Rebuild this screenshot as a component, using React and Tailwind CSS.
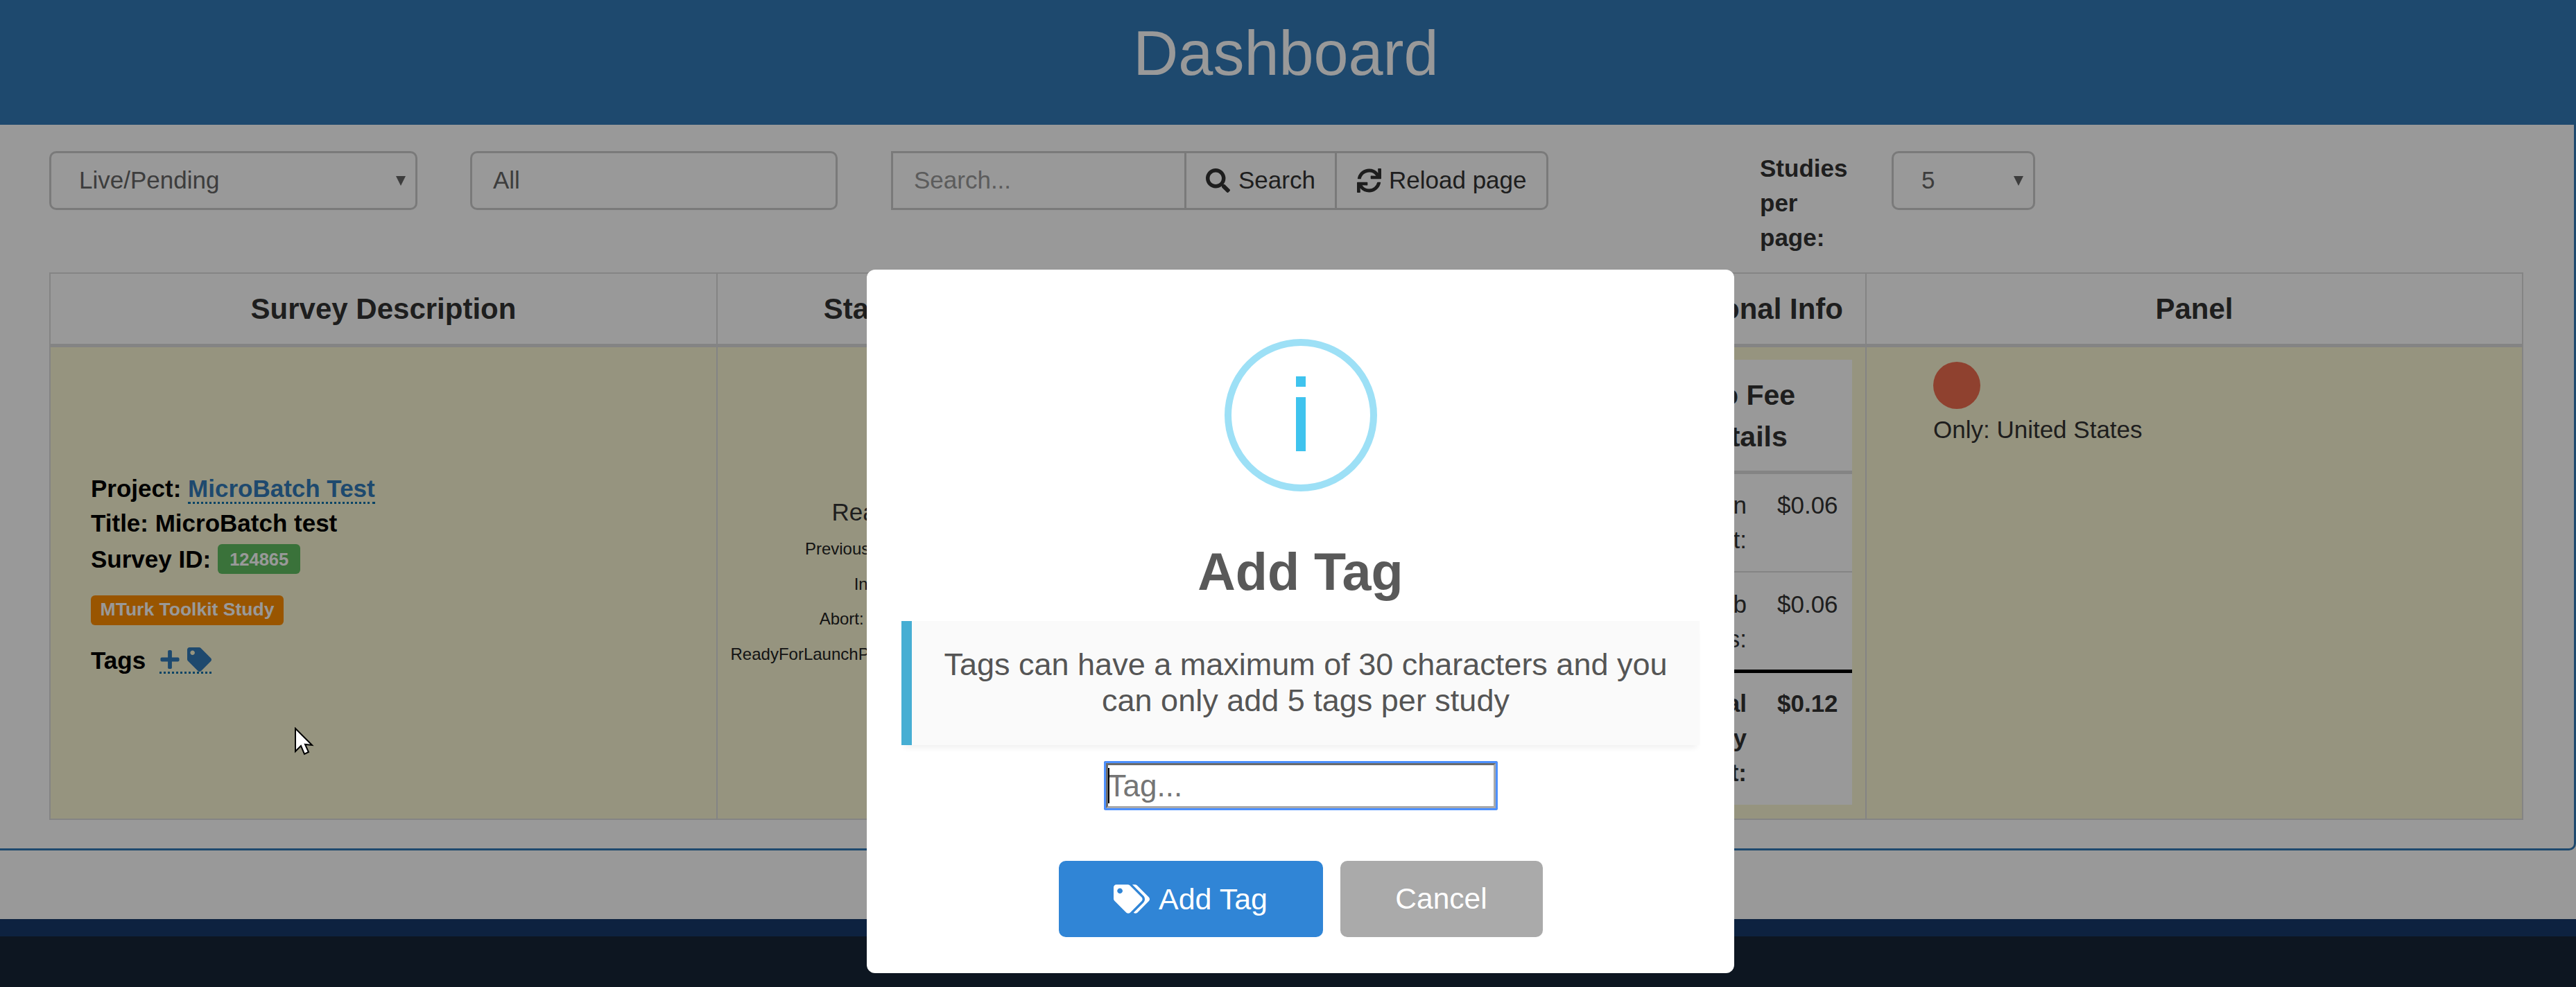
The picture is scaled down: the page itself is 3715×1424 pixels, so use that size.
import React from "react";
import { FaSearch, FaSync, FaTag, FaTags, FaPlus } from "react-icons/fa";

function Caret() {
  return (
    <svg width="14" height="14" viewBox="0 0 14 14" className="shrink-0">
      <polygon points="0,0 14,0 7,14" fill="#666" />
    </svg>
  );
}

function FeeRow({ label, value, bold, border }) {
  return (
    <div className={`${border} flex ${bold ? "font-bold" : ""} text-[35px] leading-[50px] text-[#333]`}>
      <div className="w-[169px] text-right">{label}</div>
      <div className="ml-[44px]">{value}</div>
    </div>
  );
}

function Cursor() {
  return (
    <svg className="absolute left-[424px] top-[1049px]" width="30" height="42" viewBox="0 0 30 42">
      <path d="M2 2 L2 35 L10 27 L15 39 L21 36 L16 25 L26 26 Z" fill="#fff" stroke="#000" strokeWidth="2" strokeLinejoin="miter" />
    </svg>
  );
}

export default function App() {
  return (
    <div className="relative w-[3715px] h-[1424px] overflow-hidden bg-white text-[#333] text-[35px] font-['Liberation_Sans',Arial,sans-serif]">
      <header className="h-[180px] bg-[#337ab7] flex items-center justify-center">
        <h1 className="text-[90px] leading-none text-white pb-[26px] pr-[6px]">Dashboard</h1>
      </header>

      <main className="h-[1047px] border-r-[3px] border-b-[3px] border-[#337ab7] rounded-br-[10px] pl-[71px] pr-[75px] pt-[38px]">
        <div className="h-[175px] flex items-start">
          <div className="w-[531px] h-[85px] shrink-0 border-[3px] border-[#ccc] rounded-[10px] flex items-center justify-between pl-[40px] pr-[14px] text-[#666]">
            <span>Live/Pending</span>
            <Caret />
          </div>
          <div className="ml-[76px] w-[530px] h-[85px] border-[3px] border-[#ccc] rounded-[10px] flex items-center pl-[30px] text-[#666]">All</div>

          <div className="ml-[77px] h-[85px] w-[948px] flex border-[3px] border-[#ccc] rounded-r-[10px]">
            <div className="w-[423px] flex items-center pl-[30px] text-[#999] border-r-[3px] border-[#ccc]">Search...</div>
            <div className="w-[217px] flex items-center pl-[28px] gap-[12px] border-r-[3px] border-[#ccc]">
              <FaSearch className="w-[35px] h-[35px]" />
              <span>Search</span>
            </div>
            <div className="flex-1 flex items-center pl-[29px] gap-[11px]">
              <FaSync className="w-[35px] h-[35px]" />
              <span>Reload page</span>
            </div>
          </div>

          <div className="ml-[305px] w-[130px] font-bold leading-[50px]">Studies per page:</div>
          <div className="ml-[60px] w-[207px] h-[85px] border-[3px] border-[#ccc] rounded-[10px] flex items-center justify-between pl-[40px] pr-[14px] text-[#666]">
            <span>5</span>
            <Caret />
          </div>
        </div>

        <table className="table-fixed border-collapse w-[3566px]">
          <colgroup>
            <col className="w-[962px]" />
            <col className="w-[442px]" />
            <col className="w-[855px]" />
            <col className="w-[360px]" />
            <col className="w-[947px]" />
          </colgroup>
          <thead>
            <tr className="h-[104px] text-[42px] font-bold">
              <th className="border-2 border-b-[5px] border-[#ddd]">Survey Description</th>
              <th className="border-2 border-b-[5px] border-[#ddd] pr-[6px]">Status</th>
              <th className="border-2 border-b-[5px] border-[#ddd]"></th>
              <th className="border-2 border-b-[5px] border-[#ddd]">Additional Info</th>
              <th className="border-2 border-b-[5px] border-[#ddd]">Panel</th>
            </tr>
          </thead>
          <tbody>
            <tr className="h-[684px] bg-[#fbf7d4]">
              <td className="border-2 border-[#ddd] pl-[58px] pb-[24px] align-middle">
                <div className="font-bold text-black leading-[50px]">
                  <div>
                    Project:{" "}
                    <a className="text-[#337ab7] border-b-[3px] border-dotted border-[#0a70a8]">MicroBatch Test</a>
                  </div>
                  <div>Title: MicroBatch test</div>
                  <div className="mt-[2px] flex items-center gap-[10px]">
                    <span>Survey ID:</span>
                    <span className="h-[43px] px-[17px] rounded-[6px] bg-[#62bf62] text-white text-[25.5px] flex items-center">124865</span>
                  </div>
                </div>
                <div className="mt-[27px] w-[278px] h-[43px] rounded-[6px] bg-[#ff8e00] text-white font-bold text-[26.5px] flex items-center justify-center">MTurk Toolkit Study</div>
                <div className="mt-[26px] flex items-center font-bold text-black leading-[50px]">
                  <span>Tags</span>
                  <span className="ml-[20px] flex items-center gap-[10px] text-[#337ab7] border-b-[3px] border-dotted border-[#0a70a8]">
                    <FaPlus className="w-[30px] h-[31px]" />
                    <FaTag className="w-[35px] h-[35px]" />
                  </span>
                </div>
              </td>
              <td className="border-2 border-[#ddd] text-center align-middle">
                <div className="leading-[50px] mb-[3px] mt-[2px]">Ready:</div>
                <div className="text-[24px] leading-[50.5px] text-[#222]">
                  <div>Previous: Paused</div>
                  <div>In: 0</div>
                  <div>Abort: Not set</div>
                  <div className="whitespace-nowrap">ReadyForLaunchPending: Not started</div>
                </div>
              </td>
              <td className="border-2 border-[#ddd]"></td>
              <td className="border-2 border-[#ddd] align-top pl-[18px] pt-[18px]">
                <div className="w-[321px] h-[642px] bg-white">
                  <div className="h-[165px] pt-[2px] border-b-[5px] border-[#ddd] flex items-center justify-center text-center font-bold text-[41px] leading-[60px]">
                    <div>Info Fee<br />Details</div>
                  </div>
                  <FeeRow label={<>Main<br />Cost:</>} value="$0.06" border="h-[142px] pt-[20px] border-b-2 border-[#ddd]" />
                  <FeeRow label={<>Sub<br />Jobs:</>} value="$0.06" border="h-[145px] pt-[21px] border-b-[5px] border-black" />
                  <FeeRow label={<>Total<br />Study<br />Cost:</>} value="$0.12" bold border="pt-[19px]" />
                </div>
              </td>
              <td className="border-2 border-[#ddd] align-top pl-[96px] pt-[21px]">
                <div className="w-[68px] h-[68px] rounded-full bg-[#ee6d4f]"></div>
                <div className="mt-[5px] leading-[50px]">Only: United States</div>
              </td>
            </tr>
          </tbody>
        </table>
      </main>

      <div className="h-[99px] bg-white"></div>
      <div className="h-[25px] bg-[#163a6b]"></div>
      <div className="h-[73px] bg-[#172537]"></div>

      <div className="absolute inset-0 bg-black/40 flex justify-center items-start pt-[389px] pl-[36px]">
        <div className="w-[1251px] h-[1015px] bg-white rounded-[12px] flex flex-col items-center pt-[100px]">
          <div className="w-[220px] h-[220px] rounded-full border-[10px] border-[#9de0f6] flex flex-col items-center pt-[44px]">
            <div className="w-[14px] h-[15px] bg-[#3fc3ee]"></div>
            <div className="w-[14px] h-[78px] mt-[15px] bg-[#3fc3ee]"></div>
          </div>
          <h2 className="mt-[70px] text-[75.5px] leading-[93px] font-bold text-[#595959]">Add Tag</h2>
          <div className="mt-[24px] w-[1151px] h-[179px] border-l-[15px] border-[#46aed3] bg-[#fafafa] shadow-[0_8px_8px_-4px_rgba(0,0,0,0.06)] flex items-center justify-center text-center text-[45px] leading-[52px] text-[#555] px-[40px] pb-[2px]">
            Tags can have a maximum of 30 characters and you can only add 5 tags per study
          </div>
          <div className="relative mt-[23px] w-[568px] h-[71px] rounded-[3px] border-[6px] border-t-[#6b6b6b] border-l-[#6b6b6b] border-r-[#a9a9a9] border-b-[#a9a9a9] outline-[3px] outline-[#4d90fe] -outline-offset-[3px] text-[44px] leading-[59px] text-[#757575]">
            Tag...
            <span className="absolute left-0 top-[4px] w-[2px] h-[51px] bg-black"></span>
          </div>
          <div className="mt-[73px] flex gap-[25px]">
            <button className="w-[381px] h-[110px] rounded-[10px] bg-[#3085d6] text-white text-[43px] flex items-center justify-center gap-[13px]">
              <FaTags className="w-[52px] h-[44px]" />
              <span>Add Tag</span>
            </button>
            <button className="w-[292px] h-[110px] rounded-[10px] bg-[#aaaaaa] text-white text-[42.5px]">Cancel</button>
          </div>
        </div>
      </div>

      <Cursor />
    </div>
  );
}
